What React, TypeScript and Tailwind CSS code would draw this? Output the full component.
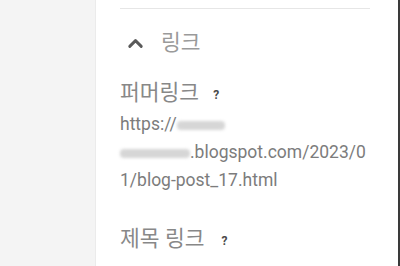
import { ChevronUp } from 'lucide-react';

const Blur = ({ w }: { w: number }) => (
  <span
    className="inline-block h-[9px] rounded-sm bg-[#d6d6d6] blur-[1.5px] align-middle"
    style={{ width: w }}
  />
);

const Help = ({ gap }: { gap: string }) => (
  <span className={`${gap} mb-[6px] self-end text-[12px] font-bold leading-none text-[#4a4a4a]`}>?</span>
);

export default function App() {
  return (
    <div
      className="flex h-[266px] w-[400px] overflow-hidden bg-white"
      style={{ fontFamily: 'Roboto, "Noto Sans CJK KR", sans-serif' }}
    >
      <div className="w-[96px] shrink-0 border-r border-[#ebebeb] bg-[#f4f4f4]" />

      <div className="flex-1 pl-[24px] pr-[28px] pt-[8px]">
        <div className="h-px bg-[#e6e6e6]" />

        <div className="mt-[20px] flex h-[28px] items-center">
          <ChevronUp className="ml-[4px] h-[23px] w-[23px] text-[#5a5a5a]" strokeWidth={3} />
          <span className="ml-[14px] text-[21.5px] leading-[28px] text-[#9a9a9a]">링크</span>
        </div>

        <div className="mt-[22px] flex h-[28px] items-center">
          <span className="text-[21.5px] leading-[28px] text-[#888]">퍼머링크</span>
          <Help gap="ml-[14px]" />
        </div>

        <div className="mt-[3px] text-[17.5px] leading-[28px] text-[#7c7c7c]">
          <div>
            https://<Blur w={48} />
          </div>
          <div>
            <Blur w={70} />.blogspot.com/2023/0
          </div>
          <div>1/blog-post_17.html</div>
        </div>

        <div className="mt-[31px] flex h-[28px] items-center">
          <span className="text-[21.5px] leading-[28px] text-[#888]">제목 링크</span>
          <Help gap="ml-[17px]" />
        </div>
      </div>

      <div className="w-[2px] shrink-0 bg-[#3a3a3a]" />
    </div>
  );
}
